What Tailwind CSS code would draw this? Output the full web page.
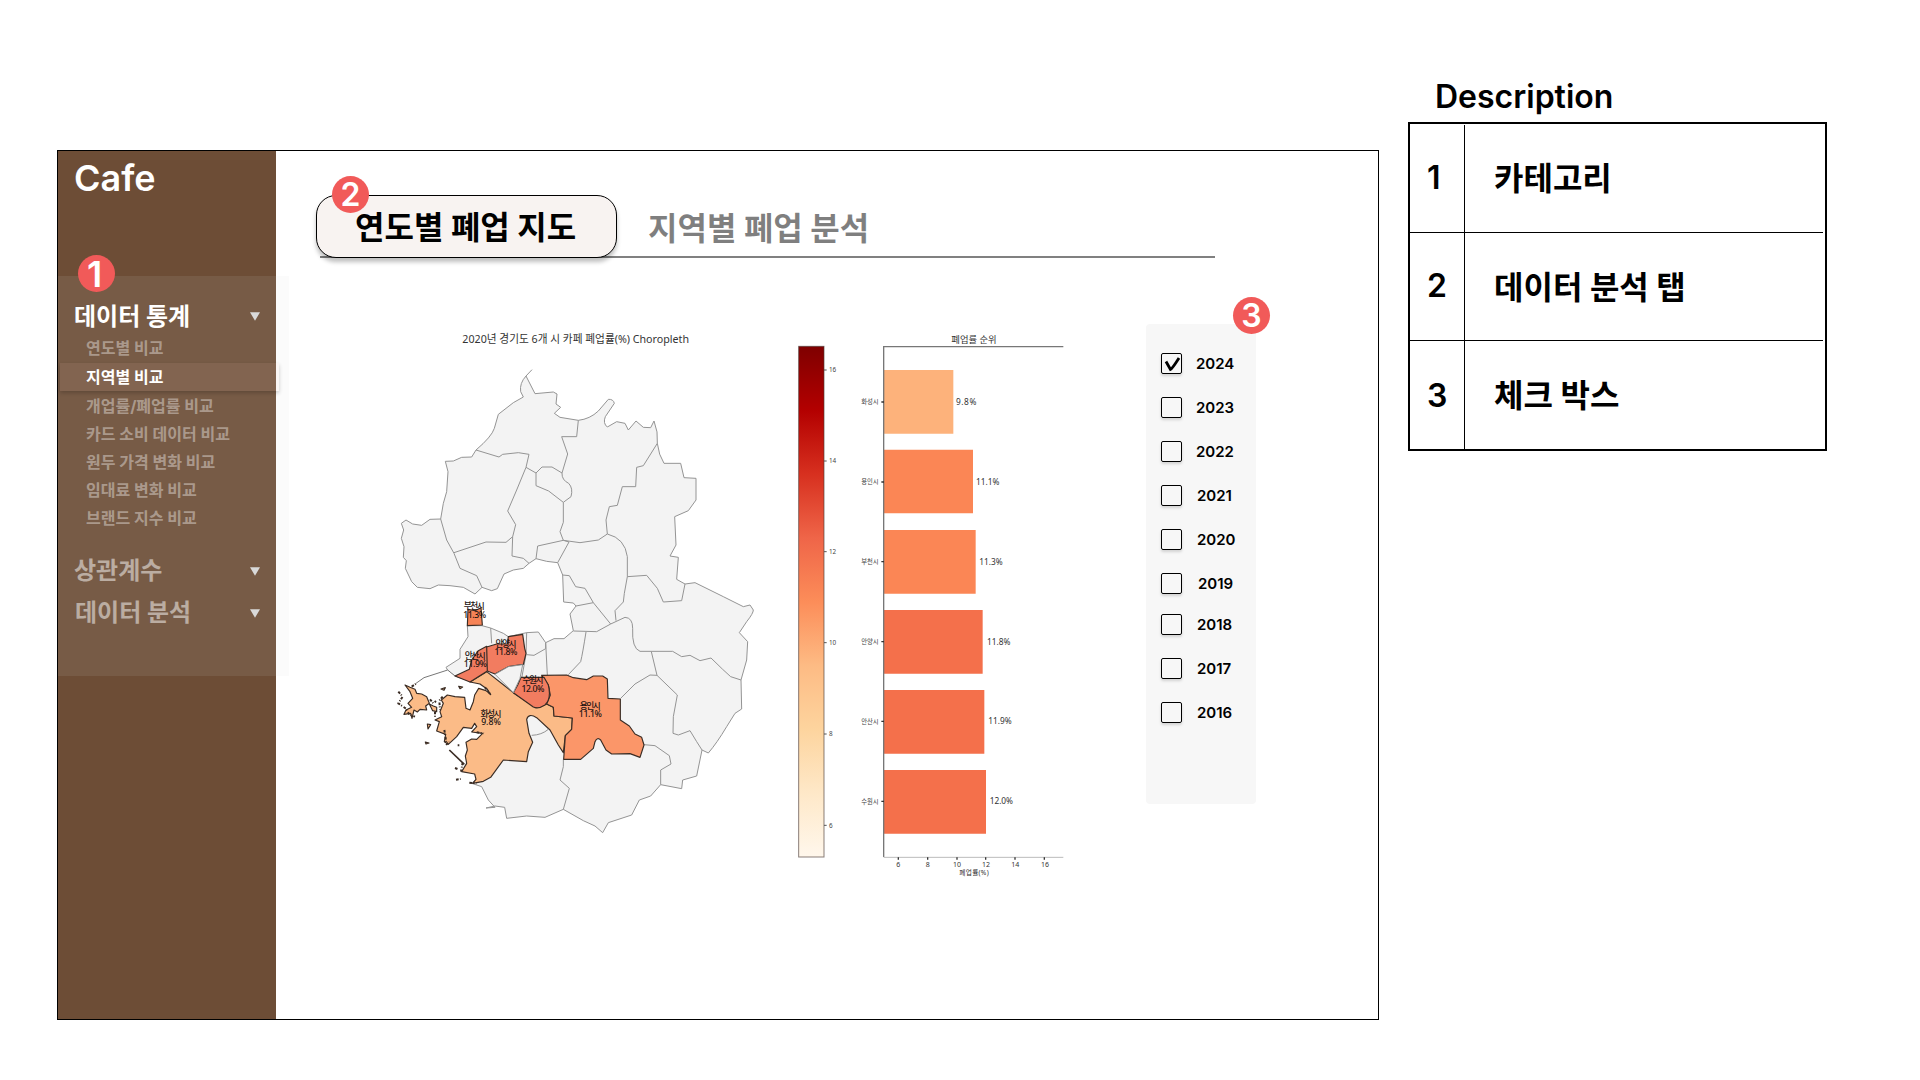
<!DOCTYPE html>
<html lang="ko">
<head>
<meta charset="utf-8">
<title>Cafe</title>
<script src="https://cdn.jsdelivr.net/npm/@tailwindcss/browser@4"></script>
</head>
<body class="bg-white">
<div class="flex h-[1080px] w-[1920px] items-start overflow-hidden bg-white pl-[57px] font-[Inter,'Noto_Sans_CJK_KR',sans-serif] text-black">

  <main class="mt-[150px] flex h-[870px] w-[1322px] shrink-0 border border-black">
    <!-- Sidebar -->
    <aside class="relative h-full w-[218px] shrink-0 bg-[#6d4d36]">
      <h1 class="h-[125px] pt-[5px] pl-4 text-[36px] leading-[44px] font-semibold text-white">Cafe</h1>
      <nav class="relative z-10 h-[400px] w-[231px] bg-[#d9d9d9]/10 pt-[22px]">
        <div class="flex h-9 items-center pl-4 text-2xl font-bold text-white">
          <span class="w-[176px] pt-px leading-9">데이터 통계</span>
          <svg class="h-[9px] w-[10px]" viewBox="0 0 10 9"><path d="M0 .3h10L5 8.7z" fill="#d9d9d9"/></svg>
        </div>
        <ul class="text-base leading-7 font-bold text-white/40">
          <li class="h-[29px] pl-7">연도별 비교</li>
          <li class="ml-0.5 h-7 w-[219px] bg-[#f5c9bb]/9 pl-[26px] text-white shadow-[0_2px_4px_rgba(0,0,0,0.2)]">지역별 비교</li>
          <li class="h-[29px] pt-px pl-7 leading-[29px]">개업률/폐업률 비교</li>
          <li class="h-7 pl-7">카드 소비 데이터 비교</li>
          <li class="h-7 pl-7">원두 가격 변화 비교</li>
          <li class="h-7 pl-7">임대료 변화 비교</li>
          <li class="h-7 pl-7">브랜드 지수 비교</li>
        </ul>
        <div class="mt-[17px] flex h-[43px] items-center pl-4 text-2xl font-bold text-white/50">
          <span class="w-[176px]">상관계수</span>
          <svg class="mt-px h-[9px] w-[10px]" viewBox="0 0 10 9"><path d="M0 .3h10L5 8.7z" fill="#d9d9d9"/></svg>
        </div>
        <div class="flex h-[42px] items-center pl-[17px] text-2xl font-bold text-white/50">
          <span class="w-[175px]">데이터 분석</span>
          <svg class="mt-px h-[9px] w-[10px]" viewBox="0 0 10 9"><path d="M0 .3h10L5 8.7z" fill="#d9d9d9"/></svg>
        </div>
      </nav>
      <span class="absolute top-[104px] left-5 z-20 flex size-[37px] items-center justify-center rounded-full bg-[#f15a59] pr-1 text-[36px] leading-none font-semibold text-white">1</span>
    </aside>

    <section class="flex flex-1 flex-col">
      <!-- Tabs -->
      <div class="relative ml-10 mt-11 h-[63px] w-[900px]">
        <div class="absolute bottom-0 left-1 h-0.5 w-[895px] bg-[#808080]"></div>
        <div class="relative flex h-full items-center text-[32px] font-bold">
          <button class="flex h-[63px] w-[301px] items-center rounded-[20px] border border-black bg-[#f8f3f1] pt-0.5 pl-[38px] shadow-[0_4px_4px_rgba(0,0,0,0.25)]">연도별 폐업 지도</button>
          <button class="ml-[31px] pt-[5px] text-black/50">지역별 폐업 분석</button>
        </div>
        <span class="absolute -top-[19px] left-4 flex size-[37px] items-center justify-center rounded-full bg-[#f15a59] text-[32px] leading-none font-semibold text-white">2</span>
      </div>

      <div class="mt-[62px] flex items-start pl-[104px]">
        <!-- Choropleth map, colour scale and ranking chart -->
        <svg class="h-[570px] w-[700px] shrink-0" viewBox="0 0 2100 1710" fill="none" font-family="'Noto Sans', 'Noto Sans CJK KR', sans-serif">
          <defs>
            <linearGradient id="scale" x1="0" y1="0" x2="0" y2="1">
              <stop offset="0" stop-color="#7f0000"/><stop offset=".125" stop-color="#b30000"/><stop offset=".25" stop-color="#d7301f"/><stop offset=".375" stop-color="#ef6548"/><stop offset=".5" stop-color="#fc8d59"/><stop offset=".625" stop-color="#fdbb84"/><stop offset=".75" stop-color="#fdd49e"/><stop offset=".875" stop-color="#fee8c8"/><stop offset="1" stop-color="#fff7ec"/>
            </linearGradient>
          </defs>
          <text x="247" y="69" font-size="34" fill="#333" textLength="680" lengthAdjust="spacingAndGlyphs">2020년 경기도 6개 시 카페 폐업률(%) Choropleth</text>

          <g stroke="#949494" stroke-width="3" stroke-linejoin="round">
            <path fill="#f3f3f3" d="M438 168Q418 190 422 215L430 231L400 248L355 283L343 325Q335 350 288 390L275 411L245 412L220 423L196 424L204 455L200 515L190 550L182 597L150 598L125 616L98 612L78 600L64 610L71 630L64 655L72 680L70 712L79 722L76 745L95 785L112 802L150 806L175 795L210 797L250 802L285 822L306 802L335 812L352 806L372 762L400 750L430 745L447 730L468 716L500 724L533 728L548 765L551 846L580 849L588 858L570 882L580 932L552 956L522 956L497 968L475 936L440 938L412 944L385 950L370 940L332 924L306 917L262 917L264 950L240 988L240 1015L198 1042L205 1054L225 1068L270 1086L420 1180L340 1330L275 1390L305 1400L325 1440L345 1462L318 1464L345 1458L374 1462L380 1495L440 1488L495 1492L550 1468L610 1502L645 1518L668 1538L685 1508L755 1485L778 1440L812 1428L842 1394L905 1406L908 1380L950 1368L966 1290L985 1299Q1010 1270 1040 1220L1065 1180L1085 1167L1083 1080L1100 1020L1103 965L1078 938L1100 905Q1120 880 1120 870L1110 855L1090 860L1030 830L945 788L915 792L890 778L895 712L870 708L888 675L884 590L925 572L948 540L948 475L912 473L902 430L852 430Q836 405 832 370Q835 335 822 303L812 323L790 322L768 303L745 330L735 310L710 305L682 321Q668 310 676 290L703 250Q700 237 685 238L655 273Q630 297 595 301L540 292L523 280L542 262L528 252L531 222L520 216L465 221Z"/>
            <path d="M456 149L438 168M288 390L357 411L368 403L415 398L447 403L438 442L410 510L383 573L407 614L398 650L378 667L318 666L222 698M182 597L200 660L222 700L240 745L290 767L306 802M398 650L396 708L430 715L447 730M438 442L468 459L486 441L516 441L546 459L563 402L545 350H590L595 301M468 459V497L506 513L550 547L573 530Q580 505 566 490Q545 480 546 459M550 547V607L540 635L550 661L473 678L468 716M533 728L567 666L550 661L600 668L655 660L682 642L678 600L688 560L712 556L727 500H767L770 442L790 437L832 370M682 642Q735 655 742 710V770L733 820L730 846L705 872L708 902M742 770L800 766L832 805L850 846L905 842L915 792M548 765L568 767L587 800L615 805L640 848L692 912L650 935L580 933M588 858L640 848M692 912L735 892Q758 893 758 925Q755 985 780 994H878L905 1010L930 1006L960 1022L993 1014L1028 1048L1052 1070L1083 1080M618 936Q608 1000 602 1025L565 1064M497 968L502 1065M440 1004L462 1006L497 986L497 968M440 938L438 1004L425 1075M332 924L335 970M814 995L831 1066L810 1065L765 1092L722 1135M831 1066L892 1125L880 1190L879 1240L895 1245L930 1232L950 1265L966 1290M792 1274L825 1277L868 1307L873 1332L842 1350V1394M550 1318V1340L540 1380L568 1405L550 1468"/>
          </g>

          <g transform="translate(0 750)" stroke="#3a2c24" stroke-width="3.5" stroke-linejoin="round">
            <path fill="#fff" stroke="#777" stroke-width="3" d="M225 318L203 300L132 323L108 340"/>
            <path fill="#fff" stroke="none" d="M225 322L280 336L345 372L200 400L120 350Z"/>
            <path fill="#fbbb87" d="M270 336L320 305L400 368L468 413L500 402L520 412L522 438L577 444L575 478L556 497L550 548L535 525L510 480L470 443Q446 428 440 448L447 490L458 517L445 545L440 575L370 570L332 622L310 634L278 640L288 628L284 612L245 605L260 580L256 558L262 540L258 517L275 507L290 508L308 490L275 486L290 470L284 460L275 475L250 472L230 500L205 523L193 515L197 493L170 483L178 455L165 450L185 440L180 425L190 400L184 390L202 375L225 380L254 382L258 415L270 420L280 395L284 375L296 355L318 362L332 374L322 358L300 342Z"/>
            <path stroke="#949494" stroke-width="3" d="M455 496Q485 495 505 478"/>
            <path fill="#fbbb87" d="M75 345L90 352L105 358L110 370L125 372L140 380L148 400L137 408L140 420L120 418L112 426L102 420L96 445L92 430L72 433L78 420L95 412L84 400L98 385L90 365ZM148 402L160 408L170 412V425L158 422ZM183 357L196 353L192 361ZM236 349L248 351L240 356ZM142 462L152 464L144 477ZM136 516L147 519L138 522Z"/>
            <path stroke-dasharray="8 4 3 6" stroke-width="6" d="M55 365L68 380L55 400L78 416L88 434L105 440M150 388L160 400L168 393M165 425V440M225 594L235 598M228 629L242 627M233 526H238M193 480L200 523L208 515M248 578L243 605M268 638L290 640M315 352L330 372M290 487L312 490M95 350L110 340M188 380L178 392L180 420"/>
            <path stroke-width="5" d="M208 540L253 583"/>
            <path fill="#fb9669" d="M485 316L560 315L580 323L620 329L640 318L668 318L682 327L684 385L721 387V450L748 468L765 492L785 502L792 525L780 562L750 551L695 552L678 540L662 510Q652 500 645 515L640 535L602 568H551L556 497L575 478L577 444L522 438L520 412L500 402L511 375L505 345Z"/>
            <path fill="#f27c60" d="M423 322L492 322L505 345Q515 385 495 405Q475 418 460 411L400 368L413 345ZM320 231L350 222L382 222L385 200L428 193L434 235L438 250L430 283L385 290L345 312L322 303ZM225 318L268 298L275 270L295 242L320 229L322 303L270 336Z"/>
            <path fill="#f68356" d="M264 118L285 122L303 113L307 165L262 167Z"/>
            <path fill="#f3f3f3" stroke="#949494" stroke-width="3" d="M345 313L385 290L428 284L420 325L400 368Z"/>
          </g>

          <g transform="translate(0 750)" fill="#1c1311" font-size="26" font-weight="500" text-anchor="middle">
            <text x="283" y="116" textLength="63">부천시</text><text x="284" y="143" textLength="69">11.3%</text>
            <text x="378" y="231" textLength="63">안양시</text><text x="378" y="256" textLength="69">11.8%</text>
            <text x="286" y="267" textLength="63">안산시</text><text x="286" y="292" textLength="69">11.9%</text>
            <text x="459" y="340" textLength="63">수원시</text><text x="459" y="366" textLength="69">12.0%</text>
            <text x="333" y="441" textLength="63">화성시</text><text x="333" y="466" textLength="59">9.8%</text>
            <text x="631" y="416" textLength="63">용인시</text><text x="631" y="441" textLength="69">11.1%</text>
          </g>

          <rect x="1256" y="79" width="76" height="1532" fill="url(#scale)" stroke="#4a3a36" stroke-opacity=".65" stroke-width="3"/>
          <path stroke="#555" stroke-width="3" d="M1332 150h8M1332 423h8M1332 695h8M1332 968h8M1332 1242h8M1332 1516h8"/>
          <g fill="#444" font-size="19">
            <text x="1347" y="157">16</text><text x="1347" y="430">14</text><text x="1347" y="702">12</text><text x="1347" y="975">10</text><text x="1347" y="1249">8</text><text x="1347" y="1523">6</text>
          </g>

          <text x="1714" y="69" font-size="27" fill="#333" textLength="136" lengthAdjust="spacingAndGlyphs">폐업률 순위</text>
          <path fill="#fdb27b" d="M1512 150h208v191h-208z"/>
          <path fill="#fb8655" d="M1512 389h267v191h-267zM1512 630h275v191h-275z"/>
          <path fill="#f4704b" d="M1512 870h296v191h-296zM1512 1110h301v191h-301zM1512 1350h306v191h-306z"/>
          <path stroke="#777" stroke-width="4" d="M2050 80H1511V1611"/>
          <path stroke="#bbb" stroke-width="3" d="M1511 1612H2050"/>
          <path stroke="#333" stroke-width="4" d="M1504 246h8M1504 486h8M1504 725h8M1504 965h8M1504 1204h8M1504 1444h8M1555 1612v7M1643 1612v7M1731 1612v7M1817 1612v7M1905 1612v7M1993 1612v7"/>
          <g fill="#444" font-size="19" text-anchor="end">
            <text x="1496" y="253">화성시</text><text x="1496" y="493">용인시</text><text x="1496" y="732">부천시</text><text x="1496" y="972">안양시</text><text x="1496" y="1211">안산시</text><text x="1496" y="1451">수원시</text>
          </g>
          <g fill="#333" font-size="25">
            <text x="1728" y="255" textLength="61">9.8%</text><text x="1788" y="495" textLength="70">11.1%</text><text x="1798" y="734" textLength="70">11.3%</text><text x="1821" y="974" textLength="70">11.8%</text><text x="1825" y="1213" textLength="70">11.9%</text><text x="1829" y="1453" textLength="70">12.0%</text>
          </g>
          <g fill="#333" font-size="21" text-anchor="middle">
            <text x="1555" y="1640">6</text><text x="1643" y="1640">8</text><text x="1731" y="1640">10</text><text x="1818" y="1640">12</text><text x="1906" y="1640">14</text><text x="1995" y="1640">16</text>
            <text x="1782" y="1666" font-size="20" textLength="88">폐업률(%)</text>
          </g>
        </svg>

        <!-- Year filter -->
        <div class="relative mt-1 ml-[66px] h-[480px] w-[110px] rounded bg-[#f7f7f7] pt-[29px] pl-[15px] text-[15px] leading-[21px] font-semibold">
          <div class="flex h-11 items-start gap-[14px]"><span class="flex size-[21px] items-center justify-center rounded-xs border border-black shadow-[0_2px_3px_rgba(0,0,0,0.15)]"><svg class="size-[19px]" viewBox="0 0 19 19" fill="none" stroke="#000" stroke-width="2.8"><path d="M4 7.5L8.5 15.5Q10 15 17 4"/></svg></span>2024</div>
          <div class="flex h-11 items-start gap-[14px]"><span class="size-[21px] rounded-xs border border-black shadow-[0_2px_3px_rgba(0,0,0,0.15)]"></span>2023</div>
          <div class="flex h-11 items-start gap-[14px]"><span class="size-[21px] rounded-xs border border-black shadow-[0_2px_3px_rgba(0,0,0,0.15)]"></span>2022</div>
          <div class="flex h-11 items-start gap-[15px]"><span class="size-[21px] rounded-xs border border-black shadow-[0_2px_3px_rgba(0,0,0,0.15)]"></span>2021</div>
          <div class="flex h-11 items-start gap-[15px]"><span class="size-[21px] rounded-xs border border-black shadow-[0_2px_3px_rgba(0,0,0,0.15)]"></span>2020</div>
          <div class="flex h-[41px] items-start gap-4"><span class="size-[21px] rounded-xs border border-black shadow-[0_2px_3px_rgba(0,0,0,0.15)]"></span>2019</div>
          <div class="flex h-11 items-start gap-[15px]"><span class="size-[21px] rounded-xs border border-black shadow-[0_2px_3px_rgba(0,0,0,0.15)]"></span>2018</div>
          <div class="flex h-11 items-start gap-[15px]"><span class="size-[21px] rounded-xs border border-black shadow-[0_2px_3px_rgba(0,0,0,0.15)]"></span>2017</div>
          <div class="flex h-11 items-start gap-[15px]"><span class="size-[21px] rounded-xs border border-black shadow-[0_2px_3px_rgba(0,0,0,0.15)]"></span>2016</div>
          <span class="absolute -top-[27px] left-[87px] flex size-[37px] items-center justify-center rounded-full bg-[#f15a59] text-[32px] leading-none font-semibold text-white">3</span>
        </div>
      </div>
    </section>
  </main>

  <!-- Description table -->
  <aside class="mt-[76px] ml-[29px] w-[419px] shrink-0 text-[32px]">
    <h2 class="h-[46px] pt-px pl-[27px] leading-10 font-semibold">Description</h2>
    <div class="h-[329px] border-2 border-black pr-0.5 font-bold">
      <div class="flex h-[109px] border-b border-black">
        <span class="mt-px w-[55px] border-r border-black pl-[17px] leading-[105px] font-semibold">1</span>
        <span class="pl-[29px] leading-[109px]">카테고리</span>
      </div>
      <div class="flex h-[108px] border-b border-black">
        <span class="w-[55px] border-r border-black pl-[17px] leading-[105px] font-semibold">2</span>
        <span class="pl-[29px] leading-[110px]">데이터 분석 탭</span>
      </div>
      <div class="flex h-[108px]">
        <span class="w-[55px] border-r border-black pl-[17px] leading-[110px] font-semibold">3</span>
        <span class="pl-[29px] leading-[109px]">체크 박스</span>
      </div>
    </div>
  </aside>
</div>
</body>
</html>
